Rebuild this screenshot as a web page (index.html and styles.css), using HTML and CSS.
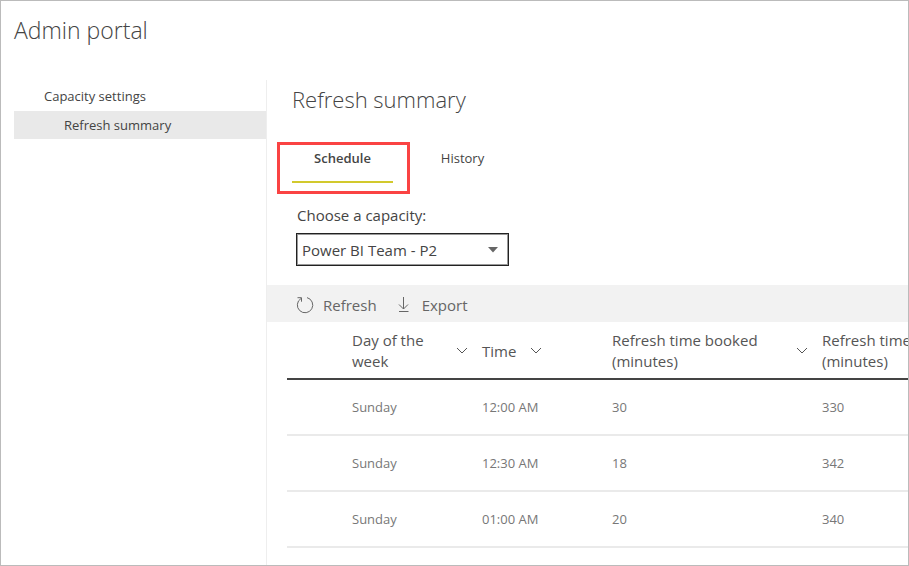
FILE: index.html
```html
<!DOCTYPE html>
<html lang="en">
<head>
<meta charset="utf-8">
<title>Admin portal</title>
<link rel="stylesheet" href="styles.css">
</head>
<body>
<div class="page">
  <header class="page-header"><h1>Admin portal</h1></header>
  <div class="layout">
    <nav class="sidebar" aria-label="Settings">
      <a class="nav-item" href="#capacity">Capacity settings</a>
      <a class="nav-item nav-child" href="#refresh" aria-current="page">Refresh summary</a>
    </nav>
    <main class="content">
      <h2>Refresh summary</h2>
      <div class="tabs" role="tablist">
        <div class="callout"><button class="tab" type="button" role="tab" aria-selected="true">Schedule</button></div>
        <button class="tab" type="button" role="tab" aria-selected="false">History</button>
      </div>
      <div class="field">
        <label for="capacity">Choose a capacity:</label>
        <div class="select-box">
          <select id="capacity"><option>Power BI Team - P2</option></select>
          <svg class="caret" viewBox="0 0 10 6" aria-hidden="true"><path d="M0 0h10L5 5.500z"/></svg>
        </div>
      </div>
      <div class="toolbar">
        <button class="command" type="button">
          <svg viewBox="0 0 18 18" aria-hidden="true"><path d="M5 2.500A7.700 7.700 0 1 0 11 1.600M1.500 1.700H5.500V5.700"/></svg>
          Refresh
        </button>
        <button class="command" type="button">
          <svg viewBox="0 0 18 18" aria-hidden="true"><path d="M8.500 1v12M4 8.500l4.500 4.500L13 8.500M4 15.500h9.500"/></svg>
          Export
        </button>
      </div>
      <div class="table-wrap">
        <table>
          <colgroup><col class="col-day"><col class="col-time"><col class="col-minutes"><col class="col-minutes"></colgroup>
          <thead>
            <tr>
              <th scope="col"><div class="head spread"><span>Day of the week</span><svg class="chevron" viewBox="0 0 12 8" aria-hidden="true"><path d="M1 1l5 5 5-5"/></svg></div></th>
              <th scope="col"><div class="head"><span>Time</span><svg class="chevron" viewBox="0 0 12 8" aria-hidden="true"><path d="M1 1l5 5 5-5"/></svg></div></th>
              <th scope="col"><div class="head spread"><span>Refresh time booked (minutes)</span><svg class="chevron" viewBox="0 0 12 8" aria-hidden="true"><path d="M1 1l5 5 5-5"/></svg></div></th>
              <th scope="col"><div class="head"><span>Refresh time<br>(minutes)</span></div></th>
            </tr>
          </thead>
          <tbody>
            <tr><td>Sunday</td><td>12:00 AM</td><td>30</td><td>330</td></tr>
            <tr><td>Sunday</td><td>12:30 AM</td><td>18</td><td>342</td></tr>
            <tr><td>Sunday</td><td>01:00 AM</td><td>20</td><td>340</td></tr>
          </tbody>
        </table>
      </div>
    </main>
  </div>
</div>
</body>
</html>
```

FILE: styles.css
```css
* { box-sizing: border-box; }

body {
  margin: 0;
  background: #fff;
  color: #444;
  font: 13px/20px "Open Sans", "Noto Sans", sans-serif;
}

button, select {
  font: inherit;
  color: inherit;
  background: none;
  border: 0;
  border-radius: 0;
  padding: 0;
}

h1, h2 {
  margin: 0;
  font-weight: 300;
  line-height: 32px;
}

h1 { font-size: 23px; }
h2 { font-size: 22px; padding-left: 25px; }

.page {
  display: flex;
  flex-direction: column;
  min-height: 100vh;
  border: 1px solid #bbb;
  overflow: hidden;
}

.page-header { padding: 13px 13px 34px; }

.layout {
  display: grid;
  grid-template-columns: 253px minmax(0, 1fr);
  flex: 1;
  padding-left: 13px;
}

.sidebar {
  border-right: 1px solid #eee;
  padding-top: 2px;
}

.nav-item {
  display: block;
  padding: 4px 30px;
  margin-bottom: 1px;
  line-height: 20px;
  color: #444;
  text-decoration: none;
}

.nav-child {
  padding-left: 50px;
  background: #e9e9e9;
}

.content { padding-top: 3px; }

.tabs {
  display: flex;
  gap: 2px;
  padding: 27px 10px 0;
}

.callout {
  border: 3px solid #fa4343;
  padding: 0 14px 8px 12px;
}

.tab {
  width: 101px;
  height: 38px;
  padding-bottom: 10px;
  border-bottom: 2px solid transparent;
}

.tabs > .tab { margin-top: 3px; }

.tab[aria-selected="true"] {
  font-weight: 600;
  border-color: #d2c92d;
}

.field {
  padding: 9px 29px 19px;
  font-size: 15px;
}

.field label {
  display: block;
  line-height: 24px;
  padding: 0 1px 6px;
}

.select-box {
  position: relative;
  width: 213px;
}

.select-box select {
  appearance: none;
  width: 100%;
  height: 33px;
  padding: 1px 5px 0;
  border: 1px solid #222;
  outline: 1px solid #999;
  outline-offset: -2px;
}

.caret {
  position: absolute;
  right: 11px;
  top: 14px;
  width: 10px;
  height: 6px;
  fill: #666;
  pointer-events: none;
}

.toolbar {
  display: flex;
  gap: 18px;
  padding: 0 29px;
  height: 37px;
  background: #f2f2f2;
}

.command {
  display: flex;
  align-items: center;
  gap: 9px;
  padding-top: 2px;
  font-size: 15px;
  color: #666;
}

.command svg {
  width: 18px;
  height: 18px;
  fill: none;
  stroke: #666;
}

.table-wrap {
  margin-left: 20px;
  overflow: hidden;
}

table {
  table-layout: fixed;
  width: 745px;
  border-collapse: collapse;
  color: #777;
}

.col-day { width: 195px; }
.col-time { width: 130px; }
.col-minutes { width: 210px; }

th, td {
  height: 56px;
  padding: 0;
  text-align: left;
  font-weight: 400;
}

th:first-child, td:first-child { padding-left: 65px; }

th {
  height: 57px;
  padding-top: 2px;
  border-bottom: 2px solid #444;
  font-size: 15px;
  line-height: 21px;
  color: #555;
}

td { border-bottom: 2px solid #eaeaea; }

.head {
  display: flex;
  align-items: center;
  gap: 14px;
}

.spread {
  justify-content: space-between;
  padding-right: 14px;
}

.chevron {
  flex: none;
  width: 12px;
  height: 8px;
  fill: none;
  stroke: #555;
}
```
